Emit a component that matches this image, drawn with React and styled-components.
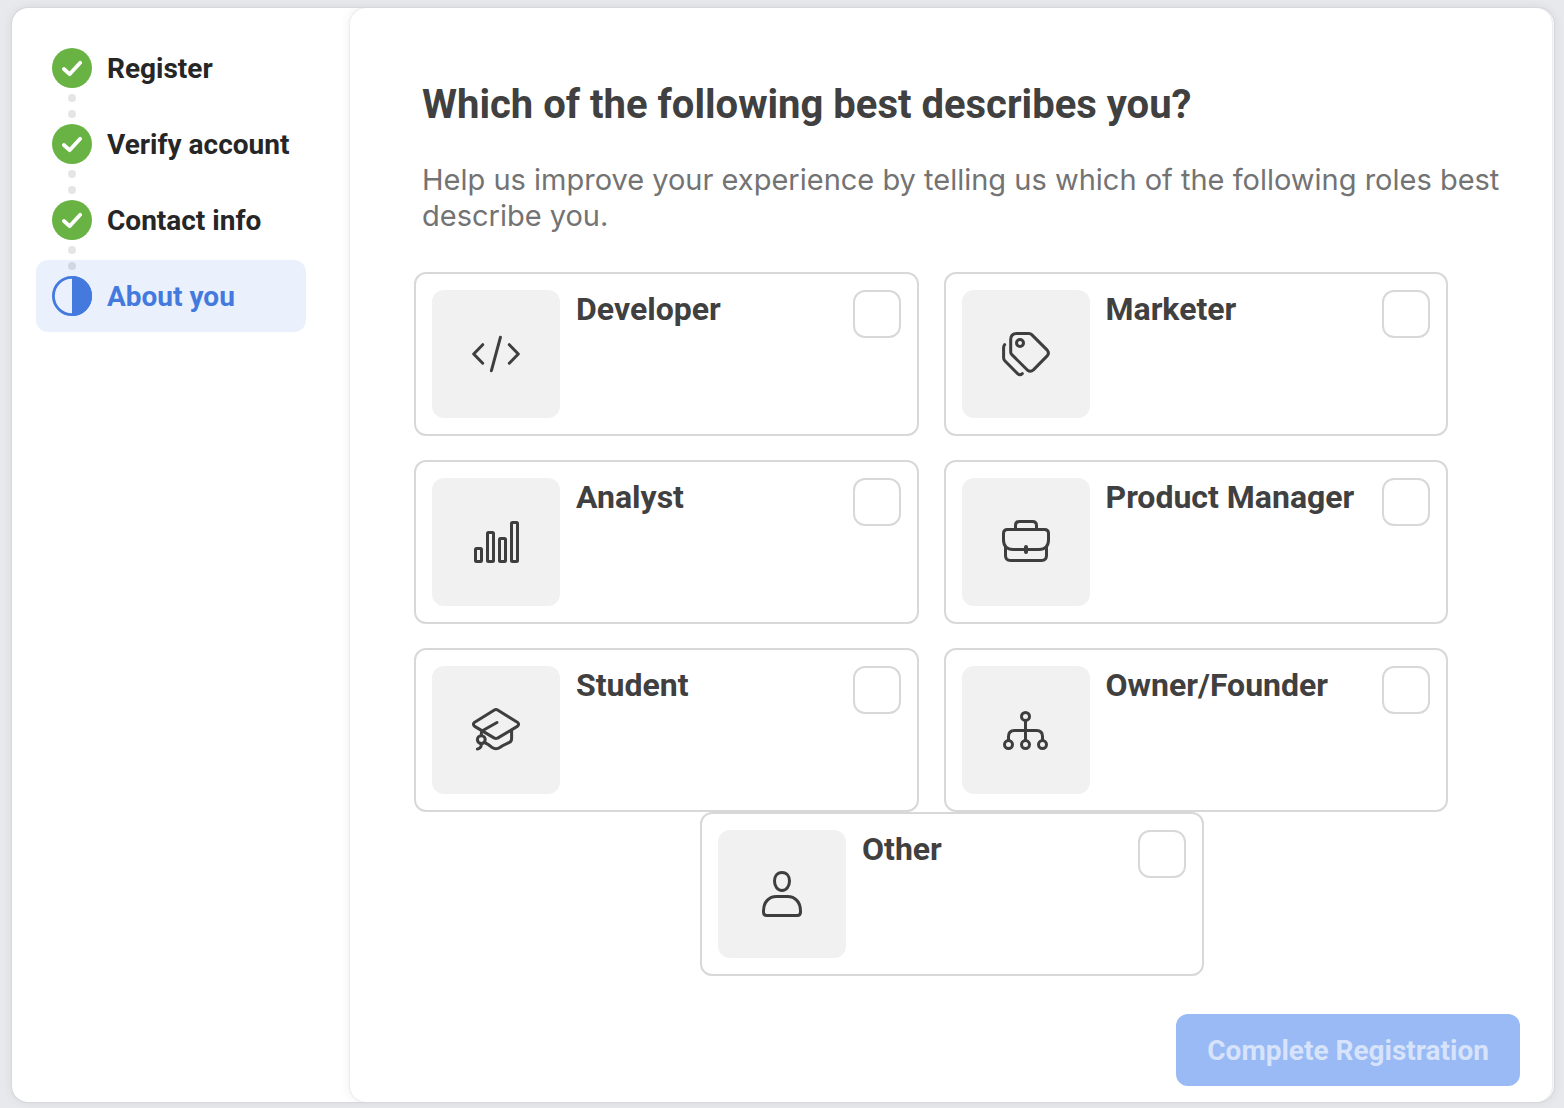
import React from "react";
import styled, { createGlobalStyle } from "styled-components";

const GlobalStyle = createGlobalStyle`
  *, *::before, *::after { box-sizing: border-box; }
  body {
    margin: 0;
    background: #e8e9ed;
    font-family: Roboto, "Liberation Sans", sans-serif;
    color: #404040;
  }
`;

const Page = styled.div`
  min-height: 100vh;
  display: flex;
  padding: 8px 10px 6px 12px;
`;

const Shell = styled.div`
  flex: 1;
  display: flex;
  padding-right: 2px;
  border-radius: 16px;
  background: #fff;
  box-shadow: 0 0 2px rgba(0, 0, 0, 0.14), 0 0 12px rgba(0, 0, 0, 0.08);
  overflow: hidden;
`;

const Sidebar = styled.nav`
  flex: 0 0 338px;
  padding: 24px 44px 24px 24px;
`;

const StepList = styled.ol`
  list-style: none;
  margin: 0;
  padding: 0;
  display: flex;
  flex-direction: column;
  gap: 4px;
`;

const Step = styled.li`
  position: relative;
  display: flex;
  align-items: center;
  gap: 15px;
  height: 72px;
  padding: 0 16px;
  border-radius: 12px;
  color: ${(p) => (p.$current ? "#447ade" : "#262626")};
  background: ${(p) => (p.$current ? "#eaf1fd" : "transparent")};
`;

const StepLabel = styled.span`
  padding-top: 2px;
  font-size: 28px;
  line-height: 36px;
  font-weight: 700;
  white-space: nowrap;
`;

const StepIcon = styled.svg`
  flex: none;
  width: 40px;
  height: 40px;
`;

const Dots = styled.span`
  position: absolute;
  z-index: 1;
  top: 62px;
  left: 32px;
  display: flex;
  flex-direction: column;
  gap: 8px;

  &::before,
  &::after {
    content: "";
    width: 8px;
    height: 8px;
    border-radius: 50%;
    background: rgba(0, 0, 0, 0.1);
  }
`;

const Main = styled.main`
  flex: 1;
  min-width: 0;
  display: flex;
  flex-direction: column;
  border-radius: 16px;
  background: #fff;
  box-shadow: 0 0 2px rgba(0, 0, 0, 0.14), 0 0 12px rgba(0, 0, 0, 0.08);
`;

const Intro = styled.header`
  padding: 73px 32px 0 72px;
`;

const Heading = styled.h1`
  margin: 0;
  font-size: 40px;
  line-height: 48px;
  font-weight: 700;
`;

const Lead = styled.p`
  margin: 33px 0 38px;
  font-family: Inter, "Liberation Sans", sans-serif;
  font-size: 29px;
  line-height: 36px;
  color: #737373;
`;

const Roles = styled.form`
  flex: 1;
  display: flex;
  flex-direction: column;
`;

const RoleArea = styled.fieldset`
  border: 0;
  margin: 0;
  min-width: 0;
  padding: 0 64px;
`;

const RoleGrid = styled.div`
  display: grid;
  grid-template-columns: 1fr 1fr;
  gap: 24px 25px;
  padding-right: 40px;
`;

const LastRow = styled.div`
  display: flex;
  justify-content: center;
  padding-left: 2px;

  & > label {
    width: calc(50% - 32px);
  }
`;

const RoleCard = styled.label`
  display: flex;
  align-items: flex-start;
  gap: 16px;
  min-width: 0;
  padding: 16px;
  border: 2px solid #d8d8d8;
  border-radius: 12px;
  background: #fff;
  cursor: pointer;
`;

const IconTile = styled.span`
  flex: none;
  display: grid;
  place-items: center;
  width: 128px;
  height: 128px;
  border-radius: 12px;
  background: #f1f1f1;
`;

const Glyph = styled.svg`
  width: 48px;
  height: 48px;
  fill: none;
  stroke: #3e3e3e;
  stroke-width: 3;
  stroke-linecap: round;
  stroke-linejoin: round;
`;

const RoleName = styled.span`
  flex: 1;
  font-size: 32px;
  line-height: 38px;
  font-weight: 700;
  white-space: nowrap;
`;

const Tick = styled.input`
  appearance: none;
  flex: none;
  width: 48px;
  height: 48px;
  margin: 0;
  border: 2px solid #d8d8d8;
  border-radius: 12px;
  background: #fff;
  cursor: pointer;

  &:checked {
    background: #447ade;
    border-color: #447ade;
  }
`;

const Footer = styled.footer`
  display: flex;
  justify-content: flex-end;
  margin-top: auto;
  padding: 38px 32px 16px;
`;

const SubmitButton = styled.button`
  height: 72px;
  padding: 2px 31px 0;
  border: 0;
  border-radius: 12px;
  background: #99baf4;
  color: #d6e3fb;
  font-family: inherit;
  font-size: 28px;
  line-height: 36px;
  font-weight: 700;
`;

const glyphs = {
  developer: (
    <path d="M10.7 14.7 1.7 24l9 9.2M37.3 14.7l9 9.3-9 9.2M28.4 7.3 19.4 40.7" />
  ),
  marketer: (
    <>
      <path d="M14.7 3.5H27Q28.6 3.5 29.7 4.6L45.2 20.1Q47.6 23 45.2 25.9L31.4 39.9Q28.5 42.4 25.6 40.2L9.8 24.6Q8.7 23.4 8.7 22V9.5Q8.7 3.5 14.7 3.5Z" />
      <circle cx="18" cy="13" r="3.5" />
      <path d="M2.6 14.7Q1.6 15.8 1.6 17.5V27.8Q1.6 29.6 2.8 30.8L15.6 43.6Q18 45.8 20.3 43.6" />
    </>
  ),
  analyst: (
    <>
      <rect x="3.5" y="30.5" width="6" height="13" rx="1" />
      <rect x="15.5" y="14.5" width="6" height="29" rx="1" />
      <rect x="27.5" y="20.5" width="6" height="23" rx="1" />
      <rect x="39.5" y="4.5" width="6" height="39" rx="1" />
    </>
  ),
  manager: (
    <>
      <path d="M13.5 11V7.5Q13.5 3.5 17.5 3.5H30.5Q34.5 3.5 34.5 7.5V11" />
      <path d="M5.5 11.5H42.5Q46.5 11.5 46.5 15.5V22C46.5 28 43 31.4 37 31.4H11C5 31.4 1.5 28 1.5 22V15.5Q1.5 11.5 5.5 11.5Z" />
      <path d="M3.5 29V37.5Q3.5 42.5 8.5 42.5H39.5Q44.5 42.5 44.5 37.5V29" />
      <path strokeWidth="4" d="M24 29V34" />
    </>
  ),
  student: (
    <>
      <path d="M22.4 4Q24 3 25.6 4L45.3 16.2Q47.9 18.3 45.3 20.4L25.6 32.1Q24 33.1 22.4 32.1L2.7 20.4Q.1 18.3 2.7 16.2Z" />
      <path d="M25 16.5 10.4 24.8Q9.3 25.5 9.3 29" />
      <circle cx="9.3" cy="33.6" r="3.9" />
      <path d="M9.4 38Q9.2 42.6 5.4 43" />
      <path d="M39.6 24V32.5Q39.6 35.4 37.4 36.4C33 38.4 31 39 28.2 41.2Q24 44.2 19.8 41.2C17.4 39.2 15.4 37.4 12.6 36.8" />
    </>
  ),
  founder: (
    <>
      <circle cx="23.5" cy="10.4" r="4" />
      <circle cx="6.5" cy="38.6" r="4" />
      <circle cx="23.5" cy="38.6" r="4" />
      <circle cx="40.5" cy="38.6" r="4" />
      <path d="M23.5 15V34M6.5 34V30.5Q6.5 24.5 12.5 24.5H34.5Q40.5 24.5 40.5 30.5V34" />
    </>
  ),
  other: (
    <>
      <path d="M24 2.5C28.8 2.5 31.5 6 31.5 11S28.6 20.5 24 20.5 16.5 16 16.5 11 19.2 2.5 24 2.5Z" />
      <path d="M5.5 41C5.5 32 11 26.5 18.5 26.5H29.5C37 26.5 42.5 32 42.5 41V42.2Q42.5 45.5 39.2 45.5H8.8Q5.5 45.5 5.5 42.2Z" />
    </>
  ),
};

const roles = [
  { id: "developer", name: "Developer" },
  { id: "marketer", name: "Marketer" },
  { id: "analyst", name: "Analyst" },
  { id: "manager", name: "Product Manager" },
  { id: "student", name: "Student" },
  { id: "founder", name: "Owner/Founder" },
];

const steps = ["Register", "Verify account", "Contact info", "About you"];

function DoneIcon() {
  return (
    <StepIcon viewBox="0 0 40 40" aria-hidden="true">
      <circle cx="20" cy="20" r="20" fill="#69b345" />
      <path
        d="M11.9 21 17.6 26.2 28.2 14.8"
        fill="none"
        stroke="#fff"
        strokeWidth="3.8"
        strokeLinecap="round"
        strokeLinejoin="round"
      />
    </StepIcon>
  );
}

function HalfIcon() {
  return (
    <StepIcon viewBox="0 0 40 40" aria-hidden="true">
      <circle cx="20" cy="20" r="18.6" fill="none" stroke="#447ade" strokeWidth="2.8" />
      <path d="M20 0a20 20 0 0 1 0 40Z" fill="#447ade" />
    </StepIcon>
  );
}

function Role({ id, name }) {
  return (
    <RoleCard htmlFor={`role-${id}`}>
      <IconTile>
        <Glyph viewBox="0 0 48 48" aria-hidden="true">
          {glyphs[id]}
        </Glyph>
      </IconTile>
      <RoleName>{name}</RoleName>
      <Tick type="checkbox" id={`role-${id}`} name="role" value={id} />
    </RoleCard>
  );
}

export default function App() {
  return (
    <>
      <GlobalStyle />
      <Page>
        <Shell>
          <Sidebar>
            <StepList>
              {steps.map((label, i) => {
                const current = i === steps.length - 1;
                return (
                  <Step key={label} $current={current}>
                    {current ? <HalfIcon /> : <DoneIcon />}
                    <StepLabel>{label}</StepLabel>
                    {!current && <Dots />}
                  </Step>
                );
              })}
            </StepList>
          </Sidebar>
          <Main>
            <Intro>
              <Heading id="question">Which of the following best describes you?</Heading>
              <Lead>
                Help us improve your experience by telling us which of the following
                roles best describe you.
              </Lead>
            </Intro>
            <Roles>
              <RoleArea aria-labelledby="question">
                <RoleGrid>
                  {roles.map((role) => (
                    <Role key={role.id} {...role} />
                  ))}
                </RoleGrid>
                <LastRow>
                  <Role id="other" name="Other" />
                </LastRow>
              </RoleArea>
              <Footer>
                <SubmitButton type="submit" disabled>
                  Complete Registration
                </SubmitButton>
              </Footer>
            </Roles>
          </Main>
        </Shell>
      </Page>
    </>
  );
}
